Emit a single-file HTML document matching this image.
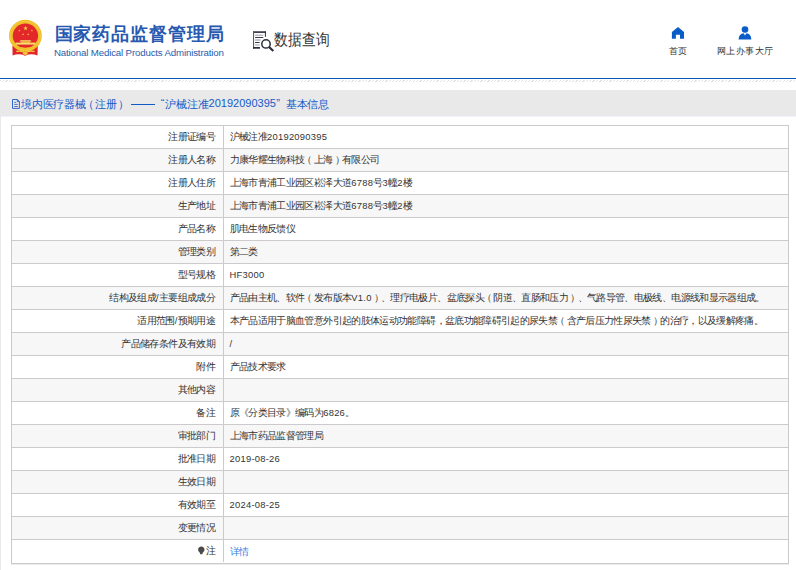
<!DOCTYPE html>
<html><head><meta charset="utf-8">
<style>
*{margin:0;padding:0;box-sizing:border-box}
html,body{width:796px;height:570px;overflow:hidden;background:#fff;font-family:"Liberation Sans",sans-serif;position:relative}
.abs{position:absolute;white-space:nowrap}
#title{left:54.5px;top:22.4px;font-size:18px;font-weight:700;color:#2759b0;letter-spacing:.9px}
#eng{left:54px;top:47px;font-size:9.7px;color:#2c5cab;letter-spacing:-.16px}
#sjcx{left:274px;top:30px;font-size:14px;color:#333;transform:scaleY(1.16);transform-origin:0 1.9px}
.nav{font-size:9px;letter-spacing:.5px;color:#333}
#blue{left:0;top:78px;width:796px;height:1.3px;background:#0657ba}
#hatch{left:0;top:80px;width:796px;height:2px;background:repeating-linear-gradient(135deg,#e2e2e2 0 .9px,#fff .9px 2.4px)}
#crumb{left:0;top:90px;width:796px;height:26px;background:#e9e9e9}
.cb{font-size:11px;color:#135ac9;top:97px;letter-spacing:-.2px}
#content{left:1px;top:116px;width:795px;height:454px;background:#fff}
.row{position:absolute;left:11px;width:778px;height:23px;border-top:1px solid #cdcacd;border-left:1px solid #cdcacd;border-right:1px solid #cdcacd;font-size:10px;letter-spacing:-.64px;color:#333;white-space:nowrap}
.lc{position:absolute;left:0;width:212px;top:0;height:22px;border-right:1px solid #cdcacd;text-align:right;padding-right:8px;line-height:22px}
.rc{position:absolute;left:217.6px;top:0;height:22px;line-height:22px}
.lk{color:#2f7fe6;position:relative;top:1px}
.pin{display:inline-block;width:8.5px;height:9px;vertical-align:-1px}
.n{letter-spacing:.25px;font-size:9.4px}
.lp{position:relative;left:-2.3px}
.rp{position:relative;left:2px}

</style></head><body>
<div class="abs" id="emblem" style="left:0;top:0;width:50px;height:62px">
<svg width="50" height="62" viewBox="0 0 50 62">
<path d="M12.4 46 L37.8 46 L37.5 55.5 Q31 53 25 55.8 Q19 53 12.6 55.5 Z" fill="#e0262b"/>
<ellipse cx="25.4" cy="35.8" rx="16.4" ry="16" fill="#f0bf2a"/>
<ellipse cx="25.4" cy="35.8" rx="14.8" ry="14.5" fill="none" stroke="#f6d65a" stroke-width="1" stroke-dasharray="1.2 1"/>
<ellipse cx="25.4" cy="35.8" rx="12.7" ry="12.2" fill="#e3282b"/>
<polygon points="25.60,25.80 26.19,27.38 27.88,27.46 26.56,28.51 27.01,30.14 25.60,29.21 24.19,30.14 24.64,28.51 23.32,27.46 25.01,27.38" fill="#f7d23c"/><polygon points="19.40,29.40 19.70,30.19 20.54,30.23 19.88,30.76 20.11,31.57 19.40,31.10 18.69,31.57 18.92,30.76 18.26,30.23 19.10,30.19" fill="#f7d23c"/><polygon points="31.90,29.40 32.20,30.19 33.04,30.23 32.38,30.76 32.61,31.57 31.90,31.10 31.19,31.57 31.42,30.76 30.76,30.23 31.60,30.19" fill="#f7d23c"/><polygon points="23.10,33.10 23.40,33.89 24.24,33.93 23.58,34.46 23.81,35.27 23.10,34.80 22.39,35.27 22.62,34.46 21.96,33.93 22.80,33.89" fill="#f7d23c"/><polygon points="28.20,33.10 28.50,33.89 29.34,33.93 28.68,34.46 28.91,35.27 28.20,34.80 27.49,35.27 27.72,34.46 27.06,33.93 27.90,33.89" fill="#f7d23c"/>
<path d="M20.5 40.2 L30.5 40.2 L31.5 41.6 L19.5 41.6 Z" fill="#f8dc6e"/>
<rect x="21" y="41.4" width="9" height="1.4" fill="#f3c63c"/>
<rect x="15.5" y="42.6" width="20" height="2" fill="#f8dc6e"/>
<path d="M14 45.2 Q25.4 50.5 36.8 45.2 L36.2 47.2 Q25.4 52 14.6 47.2 Z" fill="#f0bf2a"/>
<path d="M16 50.8 Q20.5 49.6 25.2 51.8 Q30 49.6 34.8 50.8 L34.2 52.2 Q29.5 51 25.2 53.4 Q21 51 16.6 52.2 Z" fill="#f3c63c"/>
<ellipse cx="25.2" cy="53.6" rx="2.6" ry="1.4" fill="#f3c63c"/>
</svg></div>
<div class="abs" id="title">国家药品监督管理局</div>
<div class="abs" id="eng">National Medical Products Administration</div>
<div class="abs" style="left:248px;top:27px;width:30px;height:26px">
<svg width="30" height="26" viewBox="0 0 30 26">
<rect x="5" y="4.3" width="12.8" height="1.6" fill="#2d2d3f"/>
<rect x="5" y="4.3" width="1.1" height="17.4" fill="#5a5a68"/>
<rect x="16.9" y="4.3" width="1" height="5.5" fill="#2d2d3f"/>
<rect x="5" y="20" width="7" height="1.7" fill="#2d2d3f"/>
<rect x="7.1" y="7.7" width="8.2" height="1" fill="#9a9aa6"/>
<rect x="7.1" y="10" width="8.2" height="1" fill="#3a3a4a"/>
<rect x="7.1" y="12.5" width="5.5" height="1" fill="#8a8a96"/>
<rect x="7.1" y="15" width="4.5" height="1" fill="#3a3a4a"/>
<rect x="7.1" y="17.5" width="4.5" height="1" fill="#9a9aa6"/>
<circle cx="18" cy="16.9" r="4.2" fill="#fff" stroke="#2d2d3f" stroke-width="1.5"/>
<path d="M21.1 20 L25.3 24" stroke="#2d2d3f" stroke-width="2.2"/>
</svg></div>
<div class="abs" id="sjcx">数据查询</div>
<div class="abs" style="left:668px;top:24px;width:20px;height:18px">
<svg width="20" height="18" viewBox="0 0 20 18"><path d="M10 3 L16 7.9 V14.85 H12 V10.7 H7.9 V14.85 H3.9 V7.9 Z" fill="#0a5cc8"/></svg></div>
<div class="abs nav" style="left:668.5px;top:45px">首页</div>
<div class="abs" style="left:735px;top:22px;width:20px;height:20px">
<svg width="20" height="20" viewBox="0 0 20 20"><circle cx="10" cy="7.5" r="3.3" fill="#0a5cc8"/><path d="M3.7 17.4 C3.7 13.5 6 11.4 8.6 11.2 L10 13.5 L11.4 11.2 C14 11.4 16.3 13.5 16.3 17.4 Z" fill="#0a5cc8"/></svg></div>
<div class="abs nav" style="left:716.5px;top:45px">网上办事大厅</div>
<div class="abs" id="blue"></div>
<div class="abs" id="hatch"></div>
<div class="abs" id="crumb"></div>
<div class="abs" style="left:8px;top:95px;width:18px;height:17px">
<svg width="18" height="17" viewBox="0 0 18 17"><path d="M4.5 4.5 H9.3 L11.4 6.6 V13.4 H4.5 Z M9.3 4.5 V6.6 H11.4" fill="none" stroke="#2f68c8" stroke-width="1"/><path d="M6.2 7.3 H8.2 M6.2 9.4 H9.8 M6.2 11.5 H9.8" stroke="#4a63b8" stroke-width=".9"/></svg></div>
<div class="abs cb" style="left:21px">境内医疗器械</div>
<div class="abs cb" style="left:82.8px">（</div>
<div class="abs cb" style="left:95.3px">注册</div>
<div class="abs cb" style="left:118.3px">）</div>
<div class="abs" style="left:130.8px;top:103.6px;width:24px;height:1px;background:#135ac9"></div>
<div class="abs cb" style="left:160.8px;letter-spacing:0">“</div>
<div class="abs cb" style="left:165.3px">沪械注准</div>
<div class="abs cb" style="left:208.6px;letter-spacing:0">20192090395</div>
<div class="abs cb" style="left:276.3px;letter-spacing:0">”</div>
<div class="abs cb" style="left:285.8px">基本信息</div>
<div class="abs" id="content"></div>
<div class="abs" style="left:0;top:116px;width:796px;height:1px;background:#f3f4fb"></div>
<div class="abs" style="left:0;top:90px;width:1px;height:480px;background:#e9e9e9"></div>

<div class="row" style="top:125.00px;background:#fff"><div class="lc">注册证编号</div><div class="rc">沪械注准<span class="n">20192090395</span></div></div>
<div class="row" style="top:148.00px;background:#f7f7f7"><div class="lc">注册人名称</div><div class="rc">力康华耀生物科技<span class="lp">（</span>上海<span class="rp">）</span>有限公司</div></div>
<div class="row" style="top:171.00px;background:#fff"><div class="lc">注册人住所</div><div class="rc">上海市青浦工业园区崧泽大道<span class="n">6788</span>号<span class="n">3</span>幢<span class="n">2</span>楼</div></div>
<div class="row" style="top:194.00px;background:#f7f7f7"><div class="lc">生产地址</div><div class="rc">上海市青浦工业园区崧泽大道<span class="n">6788</span>号<span class="n">3</span>幢<span class="n">2</span>楼</div></div>
<div class="row" style="top:217.00px;background:#fff"><div class="lc">产品名称</div><div class="rc">肌电生物反馈仪</div></div>
<div class="row" style="top:240.00px;background:#f7f7f7"><div class="lc">管理类别</div><div class="rc">第二类</div></div>
<div class="row" style="top:263.00px;background:#fff"><div class="lc">型号规格</div><div class="rc"><span class="n">HF3000</span></div></div>
<div class="row" style="top:286.00px;background:#f7f7f7"><div class="lc">结构及组成<span class="n">/</span>主要组成成分</div><div class="rc">产品由主机、软件<span class="lp">（</span>发布版本<span class="n">V1.0</span><span class="rp">）</span>、理疗电极片、盆底探头<span class="lp">（</span>阴道、直肠和压力<span class="rp">）</span>、气路导管、电极线、电源线和显示器组成。</div></div>
<div class="row" style="top:309.00px;background:#fff"><div class="lc">适用范围<span class="n">/</span>预期用途</div><div class="rc">本产品适用于脑血管意外引起的肢体运动功能障碍，盆底功能障碍引起的尿失禁<span class="lp">（</span>含产后压力性尿失禁<span class="rp">）</span>的治疗，以及缓解疼痛。</div></div>
<div class="row" style="top:332.00px;background:#f7f7f7"><div class="lc">产品储存条件及有效期</div><div class="rc"><span class="n">/</span></div></div>
<div class="row" style="top:355.00px;background:#fff"><div class="lc">附件</div><div class="rc">产品技术要求</div></div>
<div class="row" style="top:378.00px;background:#f7f7f7"><div class="lc">其他内容</div><div class="rc"></div></div>
<div class="row" style="top:401.00px;background:#fff"><div class="lc">备注</div><div class="rc">原《分类目录》编码为<span class="n">6826</span>。</div></div>
<div class="row" style="top:424.00px;background:#f7f7f7"><div class="lc">审批部门</div><div class="rc">上海市药品监督管理局</div></div>
<div class="row" style="top:447.00px;background:#fff"><div class="lc">批准日期</div><div class="rc"><span class="n">2019-08-26</span></div></div>
<div class="row" style="top:470.00px;background:#f7f7f7"><div class="lc">生效日期</div><div class="rc"></div></div>
<div class="row" style="top:493.00px;background:#fff"><div class="lc">有效期至</div><div class="rc"><span class="n">2024-08-25</span></div></div>
<div class="row" style="top:516.00px;background:#f7f7f7"><div class="lc">变更情况</div><div class="rc"></div></div>
<div class="row" style="top:539.00px;background:#fff;height:24px"><div class="lc"><span class="pin"><svg width="8" height="9" viewBox="0 0 8 9"><path d="M3.3 .6 C5.2 .6 6.5 1.9 6.5 3.7 C6.5 5.2 5.3 6 4.6 6.9 L4.4 8.2 H2.2 L2 6.9 C1.3 6 .1 5.2 .1 3.7 C.1 1.9 1.4 .6 3.3 .6Z" fill="#4a4a4a"/></svg></span>注</div><div class="rc"><span class="lk">详情</span></div></div>
<div class="abs" style="left:11px;top:563px;width:778px;height:1px;background:#cdcacd"></div><div class="abs" style="left:11px;top:564px;width:778px;height:1px;background:#ebeaec"></div>
</body></html>
